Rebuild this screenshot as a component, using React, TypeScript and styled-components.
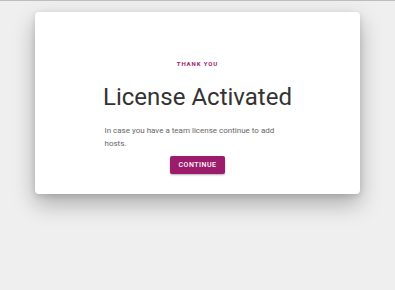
import React from "react";
import styled, { createGlobalStyle } from "styled-components";

const Global = createGlobalStyle`
  html, body { margin: 0; padding: 0; }
  body {
    background: #efefef;
    font-family: Roboto, "Liberation Sans", sans-serif;
    border-top: 1px solid #bdbdbd;
    height: 289px;
    overflow: hidden;
  }
`;

const Page = styled.div`
  display: flex;
  justify-content: center;
  padding-top: 11px;
`;

const Card = styled.div`
  width: 325px;
  height: 182px;
  box-sizing: border-box;
  background: #ffffff;
  border-radius: 4px;
  box-shadow: 0 10px 22px rgba(0, 0, 0, 0.28), 0 2px 6px rgba(0, 0, 0, 0.12);
  display: flex;
  flex-direction: column;
  align-items: center;
  padding-top: 47px;
`;

const Content = styled.div`
  width: 186px;
  display: flex;
  flex-direction: column;
  align-items: center;
`;

const Eyebrow = styled.div`
  font-size: 6px;
  font-weight: 700;
  letter-spacing: 0.9px;
  color: #9c1c6b;
  line-height: 10px;
`;

const Title = styled.h1`
  margin: 13px 0 0;
  font-size: 24px;
  font-weight: 400;
  color: #333333;
  line-height: 30px;
  white-space: nowrap;
`;

const Text = styled.p`
  align-self: stretch;
  margin: 12px 0 0;
  font-size: 8px;
  line-height: 13px;
  color: #666666;
`;

const Button = styled.button`
  margin-top: 6px;
  height: 18px;
  padding: 0 8px;
  border: none;
  border-radius: 2px;
  background: #9c1c6b;
  color: #ffffff;
  font-family: Roboto, "Liberation Sans", sans-serif;
  font-size: 7px;
  font-weight: 500;
  letter-spacing: 0.5px;
  box-shadow: 0 1px 2px rgba(0, 0, 0, 0.3);
  cursor: pointer;
`;

export default function App() {
  return (
    <>
      <Global />
      <Page>
        <Card>
          <Content>
            <Eyebrow>THANK YOU</Eyebrow>
            <Title>License Activated</Title>
            <Text>In case you have a team license continue to add hosts.</Text>
            <Button>CONTINUE</Button>
          </Content>
        </Card>
      </Page>
    </>
  );
}
